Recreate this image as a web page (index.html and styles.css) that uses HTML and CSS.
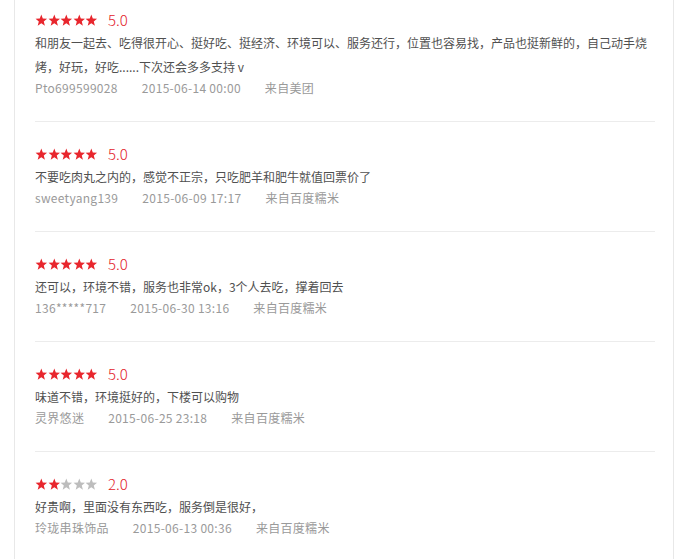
FILE: index.html
```
<!DOCTYPE html>
<html lang="zh-CN">
<head>
<meta charset="UTF-8" />
<meta name="viewport" content="width=device-width, initial-scale=1" />
<title>用户评价</title>
<link rel="stylesheet" href="styles.css">
</head>
<body>

<svg class="defs" width="0" height="0">
  <symbol id="star" viewBox="0 0 24 24">
    <polygon points="12,1 14.9,8.7 23,9.1 16.7,14.2 18.9,22.3 12,17.7 5.1,22.3 7.3,14.2 1,9.1 9.1,8.7" />
  </symbol>
</svg>

<div class="comments">
  <ul class="comment-list">
    <li class="comment">
      <div class="rating">
        <span class="stars">
          <svg class="on"><use href="#star"/></svg><svg class="on"><use href="#star"/></svg><svg class="on"><use href="#star"/></svg><svg class="on"><use href="#star"/></svg><svg class="on"><use href="#star"/></svg>
        </span>
        <span class="score">5.0</span>
      </div>
      <p class="text">和朋友一起去、吃得很开心、挺好吃、挺经济、环境可以、服务还行，位置也容易找，产品也挺新鲜的，自己动手烧烤，好玩，好吃......下次还会多多支持 v</p>
      <div class="meta">
        <span>Pto699599028</span>
        <span>2015-06-14 00:00</span>
        <span>来自美团</span>
      </div>
    </li>

    <li class="comment">
      <div class="rating">
        <span class="stars">
          <svg class="on"><use href="#star"/></svg><svg class="on"><use href="#star"/></svg><svg class="on"><use href="#star"/></svg><svg class="on"><use href="#star"/></svg><svg class="on"><use href="#star"/></svg>
        </span>
        <span class="score">5.0</span>
      </div>
      <p class="text">不要吃肉丸之内的，感觉不正宗，只吃肥羊和肥牛就值回票价了</p>
      <div class="meta">
        <span>sweetyang139</span>
        <span>2015-06-09 17:17</span>
        <span>来自百度糯米</span>
      </div>
    </li>

    <li class="comment">
      <div class="rating">
        <span class="stars">
          <svg class="on"><use href="#star"/></svg><svg class="on"><use href="#star"/></svg><svg class="on"><use href="#star"/></svg><svg class="on"><use href="#star"/></svg><svg class="on"><use href="#star"/></svg>
        </span>
        <span class="score">5.0</span>
      </div>
      <p class="text">还可以，环境不错，服务也非常ok，3个人去吃，撑着回去</p>
      <div class="meta">
        <span>136*****717</span>
        <span>2015-06-30 13:16</span>
        <span>来自百度糯米</span>
      </div>
    </li>

    <li class="comment">
      <div class="rating">
        <span class="stars">
          <svg class="on"><use href="#star"/></svg><svg class="on"><use href="#star"/></svg><svg class="on"><use href="#star"/></svg><svg class="on"><use href="#star"/></svg><svg class="on"><use href="#star"/></svg>
        </span>
        <span class="score">5.0</span>
      </div>
      <p class="text">味道不错，环境挺好的，下楼可以购物</p>
      <div class="meta">
        <span>灵界悠迷</span>
        <span>2015-06-25 23:18</span>
        <span>来自百度糯米</span>
      </div>
    </li>

    <li class="comment">
      <div class="rating">
        <span class="stars">
          <svg class="on"><use href="#star"/></svg><svg class="on"><use href="#star"/></svg><svg><use href="#star"/></svg><svg><use href="#star"/></svg><svg><use href="#star"/></svg>
        </span>
        <span class="score">2.0</span>
      </div>
      <p class="text">好贵啊，里面没有东西吃，服务倒是很好，</p>
      <div class="meta">
        <span>玲珑串珠饰品</span>
        <span>2015-06-13 00:36</span>
        <span>来自百度糯米</span>
      </div>
    </li>
  </ul>
</div>

</body>
</html>
```

FILE: styles.css
```
/* 评价列表 */
body, html {
  margin: 0; padding: 0;
  background: #fff;
  font-family: "Noto Sans CJK SC", "Liberation Sans", sans-serif;
  color: #555;
  overflow: hidden;
}

.defs {
  position: absolute;
}

.comments {
  width: 620px;
  margin-left: 14px;
  padding: 0 18px 0 20px;
  border-left: 1px solid #e8e8e8;
  border-right: 1px solid #e8e8e8;
  min-height: 600px;
}

.comment-list {
  list-style: none;
  margin: -12px 0 0;
  padding: 0;
}

.comment {
  padding: 21px 0 24px;
  border-bottom: 1px solid #ececec;
}

.rating {
  display: flex;
  align-items: center;
  height: 22px;
}

.stars {
  display: flex;
}
.stars svg {
  width: 12.6px;
  height: 12.6px;
  fill: #bdbdbd;
}
.stars svg.on {
  fill: #e8262d;
}

.score {
  margin-left: 10px;
  font-size: 15px;
  font-weight: 300;
  color: #e3232a;
  line-height: 22px;
}

.text {
  margin: 0;
  font-size: 12px;
  line-height: 24px;
  color: #505050;
}

.meta {
  display: flex;
  gap: 24px;
  font-size: 12px;
  line-height: 18px;
  letter-spacing: 0.3px;
  color: #9a9a9a;
}
```
